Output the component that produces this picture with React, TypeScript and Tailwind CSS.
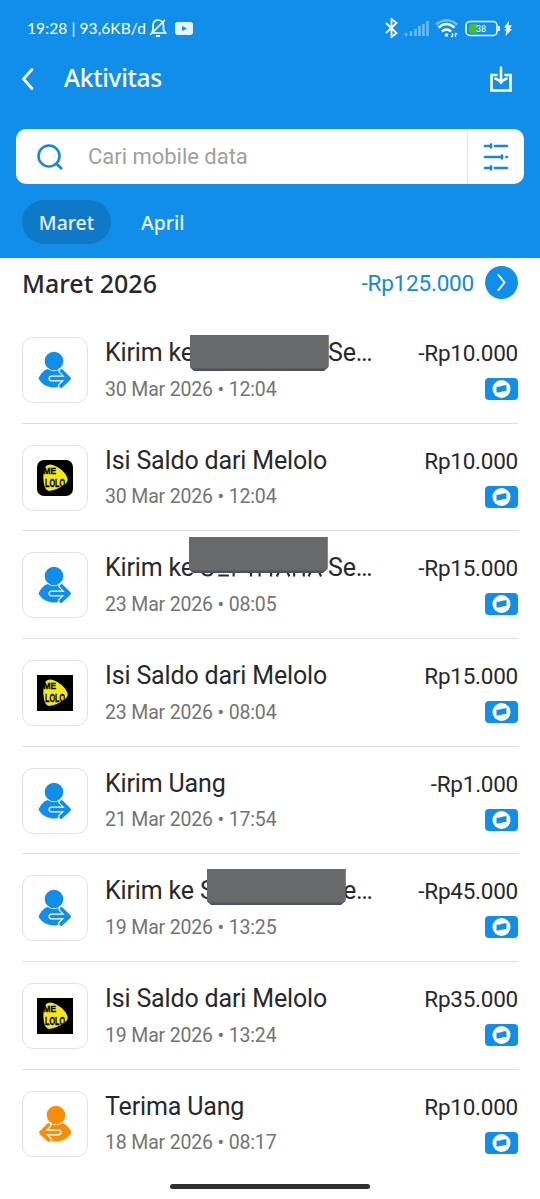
import type { ReactNode } from "react";

type Activity = {
  kind: "send" | "receive" | "melolo" | "meloloRounded";
  title: ReactNode;
  date: string;
  amount: string;
};

function Mask({ className }: { className: string }) {
  return (
    <svg className={`absolute h-[37px] w-[139px] ${className}`} viewBox="0 0 139 37" aria-hidden="true">
      <path d="M0 0H138.500V32L134 36H4L0 32Z" fill="#515254" />
      <path d="M0 0H138.500V31L136 33.500H3L0 32Z" fill="#68696b" />
      <path d="M1 32.500L5 35.500H32" stroke="#4a4c7d" strokeWidth="1" fill="none" />
    </svg>
  );
}

const activities: Activity[] = [
  {
    kind: "send",
    title: (
      <>
        <span className="w-[223px]">Kirim ke</span>
        <span>Se…</span>
        <Mask className="left-[84.5px] top-[-2px]" />
      </>
    ),
    date: "30 Mar 2026 • 12:04",
    amount: "-Rp10.000",
  },
  { kind: "meloloRounded", title: "Isi Saldo dari Melolo", date: "30 Mar 2026 • 12:04", amount: "Rp10.000" },
  {
    kind: "send",
    title: (
      <>
        <span className="w-[223px]">Kirim ke</span>
        <span>Se…</span>
        <svg className="absolute left-[96px] top-[19px] h-[6px] w-[121px]" viewBox="0 0 126 6" preserveAspectRatio="none" stroke="#2b2b2d" strokeWidth="2.2" fill="none">
          <path d="M1 1Q3 4.500 7 4.500T12 1M18 4.500H29M34 1V5.500M52 1V5.500M61 1V5.500M73 1V5.500M79 5.500L81 1M90 1L92 5.500M97 1V5.500M107 1V5.500M112 5.500L114 1M123 1L125 5.500" />
        </svg>
        <Mask className="left-[83.5px] top-[-15px]" />
      </>
    ),
    date: "23 Mar 2026 • 08:05",
    amount: "-Rp15.000",
  },
  { kind: "melolo", title: "Isi Saldo dari Melolo", date: "23 Mar 2026 • 08:04", amount: "Rp15.000" },
  { kind: "send", title: "Kirim Uang", date: "21 Mar 2026 • 17:54", amount: "-Rp1.000" },
  {
    kind: "send",
    title: (
      <>
        <span className="w-[238px]">Kirim ke S</span>
        <span>e…</span>
        <Mask className="left-[101.5px] top-[-6px]" />
      </>
    ),
    date: "19 Mar 2026 • 13:25",
    amount: "-Rp45.000",
  },
  { kind: "melolo", title: "Isi Saldo dari Melolo", date: "19 Mar 2026 • 13:24", amount: "Rp35.000" },
  { kind: "receive", title: "Terima Uang", date: "18 Mar 2026 • 08:17", amount: "Rp10.000" },
];

function PersonIcon({ receive = false }: { receive?: boolean }) {
  const color = receive ? "#fb8c05" : "#118eea";
  return (
    <svg width="34" height="38" viewBox="0 0 34 38" className={receive ? "-scale-x-100" : ""}>
      <path d="M0.500 27.500C4 19.500 9 17 16 17S28 20 32 27.500C28 33 24 36.500 17 36.500S4 34 0.500 27.500Z" fill={color} />
      <circle cx="16" cy="10" r="10.200" fill="white" />
      <circle cx="16" cy="10" r="9.300" fill={color} />
      <path d="M13.500 27.500H29M23.500 20L31 27.500L23 35" fill="none" stroke="white" strokeWidth="6" strokeLinejoin="round" strokeLinecap="round" />
      <path d="M23.500 20L31 27.500L23 35" fill="none" stroke={color} strokeWidth="3.800" strokeLinejoin="round" strokeLinecap="round" />
      <path d="M13.500 27.500H30" stroke={color} strokeWidth="3.400" strokeLinecap="round" />
    </svg>
  );
}

function MeloloLogo({ rounded = false }: { rounded?: boolean }) {
  return (
    <svg width="36" height="36" viewBox="0 0 36 36" className="overflow-visible">
      <rect width="36" height="36" rx={rounded ? 7 : 0} fill="black" />
      <path d="M9 6Q12 3.500 16 5Q27 9 30.500 18Q31.500 22 27 25Q20 30 12 31Q8 30 7 24Q5 14 9 6Z" fill="#f5e71b" />
      <g fontFamily="'Liberation Sans', sans-serif" fontWeight="700" fill="black" stroke="black" strokeWidth="0.3">
        <text x="6.500" y="13.500" fontSize="9.500" textLength="12.500" lengthAdjust="spacingAndGlyphs">ME</text>
        <text x="8" y="26.500" fontSize="11.500" textLength="20" lengthAdjust="spacingAndGlyphs">LOLO</text>
      </g>
    </svg>
  );
}

function BalanceBadge() {
  return (
    <svg width="33" height="22" viewBox="0 0 33 22">
      <rect width="33" height="22" rx="4" fill="#118eea" />
      <circle cx="16.500" cy="11" r="9" fill="white" />
      <path d="M11.500 8.500Q14 9.200 16.500 8T21.500 7.300V13Q19 12.700 16.500 13.800T11.500 14.500Z" fill="#118eea" />
    </svg>
  );
}

function StatusBar() {
  return (
    <div className="flex h-[56px] items-center justify-between pl-[27px] pr-[27px] text-white">
      <div className="flex items-center">
        <span className="w-[122px] whitespace-nowrap pt-px font-['Lato'] text-[15.5px] tracking-[0.1px]">19:28 | 93,6KB/d</span>
        <svg width="18" height="20" viewBox="0 0 18 20" fill="none" stroke="white" strokeWidth="1.700" className="overflow-visible">
          <path d="M3 15H16.500L14.500 12V8C14.500 4 12 2 9 2S4 4 4 8V12L3 15M1 17L16 2" />
          <path d="M7 18H11" strokeWidth="2" />
        </svg>
        <svg width="18" height="14" viewBox="0 0 18 14" className="ml-[7.5px] mt-px">
          <rect width="18" height="13" rx="3" fill="#e8f5ff" />
          <path d="M7 4L12 6.500L7 9Z" fill="#118eea" />
        </svg>
      </div>
      <svg width="130" height="20" viewBox="383 18 130 20" fill="none">
        <path d="M386 23L396.500 33L391.500 37V19L396.500 23L386 33" stroke="white" strokeWidth="1.800" />
        <path d="M406 36V33M411 36V31M415.500 36V29M419.500 36V26M423.500 36V24M427.500 36V21" stroke="#70bdf4" strokeWidth="2.500" />
        <path d="M436 24.500Q446.500 16 457 24.500" stroke="#70bdf4" strokeWidth="2.500" />
        <path d="M438.500 27.500Q446.500 20.500 454.500 27.500M442 31.500Q446.500 27.500 451 31.500" stroke="white" strokeWidth="2.500" />
        <circle cx="446.500" cy="35" r="1.800" fill="white" />
        <path d="M452.500 33V37M455.500 33V37M451 36L452.500 37M457 34L455.500 33" stroke="white" strokeWidth="1.300" />
        <rect x="466" y="21.500" width="31" height="14" rx="4" stroke="white" strokeWidth="1.500" />
        <path d="M471 24H477V33H471Q469 33 469 31V26Q469 24 471 24Z" fill="#48bd2c" />
        <rect x="498" y="26" width="2" height="5" rx="1" fill="white" />
        <text x="476" y="32" fontSize="9" fill="white" fontFamily="Roboto, sans-serif">38</text>
        <path d="M509 21L504 27.500H507L504.500 30.500H506.500L505.500 36L512 29H509.500L512 25.500H508.500Z" fill="white" />
      </svg>
    </div>
  );
}

function ActivityIcon({ kind }: { kind: Activity["kind"] }) {
  if (kind === "melolo" || kind === "meloloRounded") return <MeloloLogo rounded={kind === "meloloRounded"} />;
  return <PersonIcon receive={kind === "receive"} />;
}

export default function App() {
  return (
    <div className="flex h-[1199px] w-[540px] flex-col overflow-hidden bg-white font-['Roboto',sans-serif] text-[#28282a]">
      <header className="h-[258px] shrink-0 bg-[#118eea]">
        <StatusBar />

        {/* Page title */}
        <div className="flex h-[46px] items-center pl-[21px] pr-[28px]">
          <svg width="13" height="22" viewBox="0 0 13 22" fill="none" stroke="white" strokeWidth="2.700">
            <path d="M11 1.500L2.500 11L11 20.500" strokeLinejoin="round" strokeLinecap="round" />
          </svg>
          <h1 className="-mt-[3px] ml-[30px] flex-1 font-['Noto_Sans'] text-[24.5px] font-medium leading-[32px] tracking-[-0.3px] text-white">Aktivitas</h1>
          <svg width="22" height="26" viewBox="0 0 22 26" fill="none" stroke="white" strokeWidth="2.600">
            <path d="M6.500 9H1.500V24.500H20.500V9H15.500M11 1.500V15M5.500 12.500Q9 14 11 16.500Q13 14 16.500 12.500" strokeLinecap="round" />
          </svg>
        </div>

        {/* Search */}
        <div className="mx-4 mt-[27px] flex h-[55px] w-[508px] items-center rounded-[10px] bg-white">
          <svg width="26" height="26" viewBox="0 0 26 26" fill="none" stroke="#1688d8" strokeWidth="2.500" className="ml-[21px]">
            <circle cx="12" cy="12" r="10.500" />
            <path d="M18.500 19L25 25" strokeWidth="2.800" />
          </svg>
          <span className="ml-[25px] flex-1 text-[22px] tracking-[-0.02px] text-[#a0a0a0]">Cari mobile data</span>
          <div className="flex h-full w-[57px] items-center justify-center border-l border-[#dfe7ec]">
            <svg width="26" height="28" viewBox="0 0 26 28" fill="none" stroke="#1688d8" strokeWidth="2.700" strokeLinecap="round">
              <path d="M2 3H8M12 3H24M2 14H19M23.500 14H24M2 25H8M12 25H24M8 1.700V4.300M19 12.700V15.300M8 23.700V26.300" />
            </svg>
          </div>
        </div>

        {/* Months */}
        <div className="ml-[22px] mt-4 flex font-['Noto_Sans'] text-[19.4px] font-medium leading-[46px] text-white/90">
          <button className="h-[44px] w-[89px] rounded-full bg-[#1079c7]">Maret</button>
          <button className="ml-[30px]">April</button>
        </div>
      </header>

      <main className="flex flex-col px-[22px]">
        <div className="flex h-[58px] items-start pt-[8px]">
          <h2 className="flex-1 font-['Noto_Sans'] text-[25px] font-medium leading-[34px]">Maret 2026</h2>
          <span className="text-[22.5px] leading-[34px] tracking-[-0.2px] text-[#1688d8]">-Rp125.000</span>
          <svg width="33" height="33" viewBox="0 0 33 33" className="ml-[11px]">
            <circle cx="16.500" cy="16.500" r="16.500" fill="#118eea" />
            <path d="M13.500 9L19.500 16.500L13.500 24" fill="none" stroke="white" strokeWidth="2" strokeLinecap="round" />
          </svg>
        </div>

        {activities.map((item, i) => (
          <article key={i} className="flex h-[107.7px] shrink-0 items-start border-b border-[#dfdfdf] pt-[21px] last:border-0">
            <div className="flex h-[66px] w-[66px] shrink-0 items-center justify-center rounded-[11px] border border-[#e3e3e3]">
              <ActivityIcon kind={item.kind} />
            </div>
            <div className="ml-[17px] flex-1 whitespace-nowrap">
              <div className="relative flex text-[25px] leading-[31px] tracking-[-0.15px]">{item.title}</div>
              <p className="mt-[9.5px] text-[19.5px] leading-[24px] tracking-[-0.16px] text-[#747474]">{item.date}</p>
            </div>
            <div className="flex flex-col items-end">
              <span className="text-[22.5px] leading-[32px] tracking-[-0.25px]">{item.amount}</span>
              <span className="mt-[9px]">
                <BalanceBadge />
              </span>
            </div>
          </article>
        ))}
      </main>

      <div className="mt-[6px] h-[5px] w-[200px] shrink-0 self-center rounded-full bg-[#303030]" />
    </div>
  );
}
